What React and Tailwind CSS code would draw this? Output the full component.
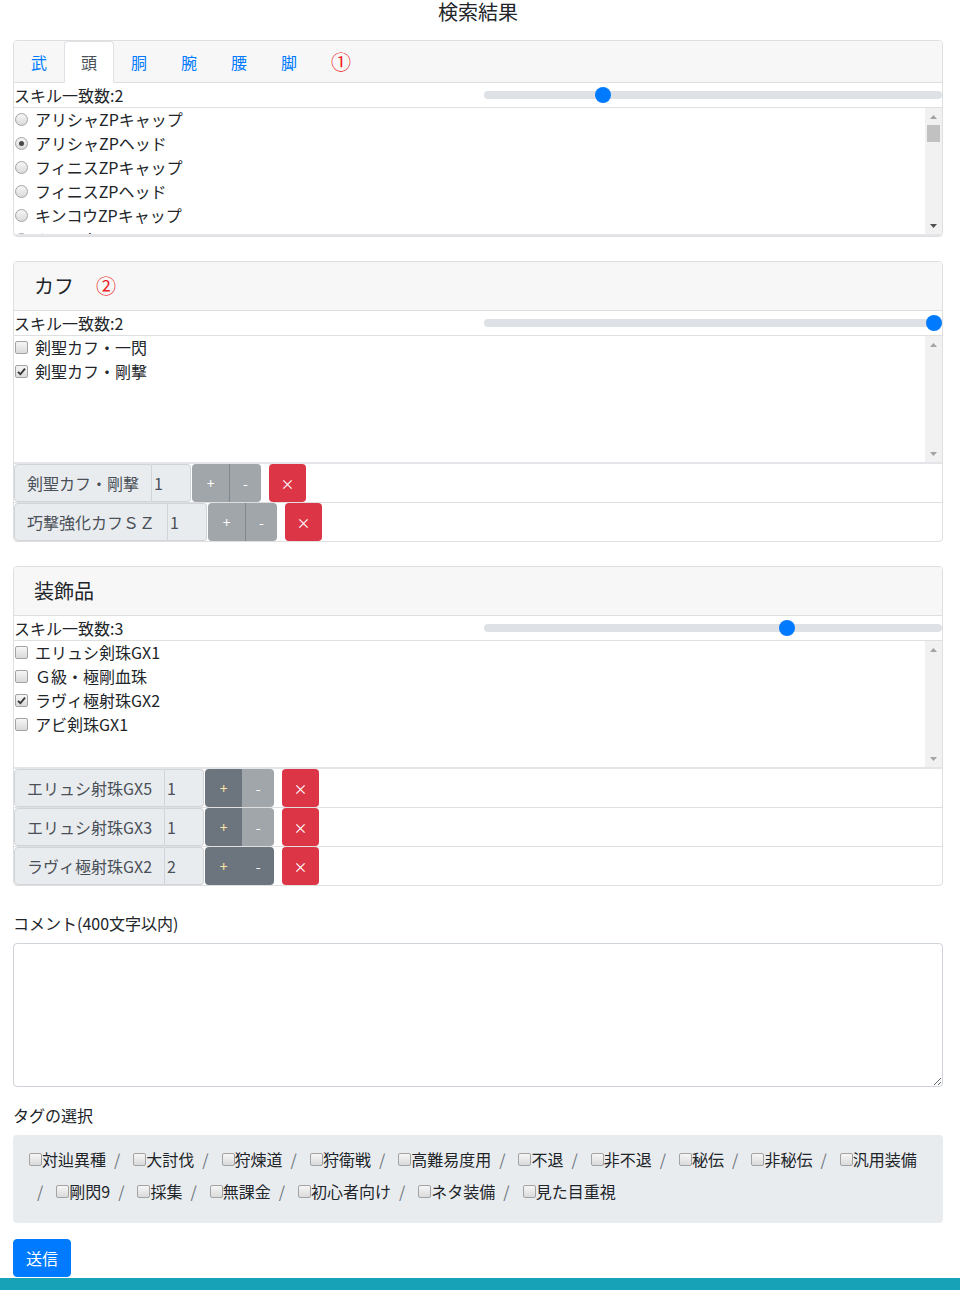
import React from "react";

function Radio({ checked }) {
  return (
    <span className="flex h-[13px] w-[13px] shrink-0 items-center justify-center rounded-full border border-[#a3a3a3] bg-linear-to-b from-[#f6f6f6] to-[#dadada]">
      {checked && <span className="h-[5px] w-[5px] rounded-full bg-[#4a4a4a]" />}
    </span>
  );
}

function Check({ checked }) {
  return (
    <span className="flex h-[13px] w-[13px] shrink-0 items-center justify-center rounded-[2px] border border-[#a3a3a3] bg-linear-to-b from-[#f6f6f6] to-[#dadada]">
      {checked && (
        <svg width="9" height="9" viewBox="0 0 9 9">
          <path d="M1 4.8 L3.4 7.2 L8 1.6" fill="none" stroke="#333" strokeWidth="1.8" />
        </svg>
      )}
    </span>
  );
}

function Scrollbar({ thumb, downDark }) {
  return (
    <div className="flex w-[17px] shrink-0 flex-col items-center bg-[#f1f1f1]">
      <div className="flex h-[17px] w-full items-center justify-center">
        <svg width="7" height="4" viewBox="0 0 7 4">
          <path d="M0 4 L3.5 0 L7 4 Z" fill="#a3a3a3" />
        </svg>
      </div>
      {thumb && <div className="h-[17px] w-[13px] bg-[#c1c1c1]" />}
      <div className="flex-1" />
      <div className="flex h-[17px] w-full items-center justify-center">
        <svg width="7" height="4" viewBox="0 0 7 4">
          <path d="M0 0 L7 0 L3.5 4 Z" fill={downDark ? "#505050" : "#a3a3a3"} />
        </svg>
      </div>
    </div>
  );
}

function SkillRow({ count, min, max }) {
  const ratio = (count - min) / (max - min);
  return (
    <div className="flex h-[25px] items-center justify-between border-b border-[#dfdfdf]">
      <span className="leading-6">スキル一致数:{count}</span>
      <div className="relative h-2 w-[458px] rounded-full bg-[#dee2e6]">
        <span
          className="absolute top-[-4px] h-4 w-4 rounded-full bg-[#007bff]"
          style={{ left: `${Math.round(ratio * 442)}px` }}
        />
      </div>
    </div>
  );
}

function ListBox({ children, thumb, downDark }) {
  return (
    <div className="flex h-[128px] overflow-hidden border-b-2 border-[#e3e5e8]">
      <div className="flex-1 overflow-hidden">{children}</div>
      <Scrollbar thumb={thumb} downDark={downDark} />
    </div>
  );
}

function ListItem({ type, checked, label }) {
  return (
    <div className="flex h-6 items-center gap-[7px] pl-px leading-6 whitespace-nowrap">
      {type === "radio" ? <Radio checked={checked} /> : <Check checked={checked} />}
      <span>{label}</span>
    </div>
  );
}

function ItemRow({ label, qty, plus, minus }) {
  const bothOff = !plus && !minus;
  return (
    <div className="flex h-[39px] border-b border-[#dfdfdf] last:h-[38px] last:border-b-0">
      <div className="flex h-[38px]">
        <span className="flex items-center rounded-l border border-[#ced4da] bg-[#e9ecef] px-3 text-[#495057] whitespace-nowrap">
          {label}
        </span>
        <span className="flex w-[39px] items-center rounded-r border-y border-r border-[#ced4da] bg-[#e9ecef] pl-[2px] text-[#495057]">
          {qty}
        </span>
      </div>
      <div className="ml-px flex h-[38px]">
        <span
          className={
            plus
              ? "flex w-[37px] items-center justify-center rounded-l bg-[#6c757d] text-sm text-[#fbe7a1]"
              : "flex w-[37px] items-center justify-center rounded-l bg-[#a1a6ab] text-sm text-white"
          }
        >
          +
        </span>
        <span
          className={
            minus
              ? "flex w-[32px] items-center justify-center rounded-r bg-[#6c757d] text-sm text-white"
              : bothOff
              ? "flex w-[32px] items-center justify-center rounded-r border-l border-[#7f878e] bg-[#a1a6ab] text-sm text-white"
              : "flex w-[32px] items-center justify-center rounded-r bg-[#a1a6ab] text-sm text-white"
          }
        >
          -
        </span>
      </div>
      <span className="ml-2 flex h-[38px] w-[37px] items-center justify-center rounded bg-[#dc3545] text-sm text-white">
        ×
      </span>
    </div>
  );
}

function CardHeader({ title, mark }) {
  return (
    <div className="flex h-[49px] items-center border-b border-[#dfdfdf] bg-[#f7f7f7] px-5 text-xl leading-6">
      <span>{title}</span>
      {mark && <span className="ml-[22px] text-[#ee1c25]">{mark}</span>}
    </div>
  );
}

const tags = [
  "対辿異種",
  "大討伐",
  "狩煉道",
  "狩衛戦",
  "高難易度用",
  "不退",
  "非不退",
  "秘伝",
  "非秘伝",
  "汎用装備",
  "剛閃9",
  "採集",
  "無課金",
  "初心者向け",
  "ネタ装備",
  "見た目重視",
];

export default function App() {
  const tabs = ["武", "頭", "胴", "腕", "腰", "脚"];
  return (
    <div className="min-h-[1290px] w-[960px] bg-white font-['Noto_Sans_CJK_JP','Noto_Sans',sans-serif] text-base text-[#212529]">
      <div className="ml-[13px] w-[930px]">
        <h1 className="mb-4 text-center text-xl leading-6">検索結果</h1>

        {/* Card 1 */}
        <div className="mb-6 overflow-hidden rounded border border-[#dfdfdf]">
          <div className="flex h-[42px] items-end border-b border-[#dfdfdf] bg-[#f7f7f7]">
            {tabs.map((t) =>
              t === "頭" ? (
                <span
                  key={t}
                  className="-mb-px rounded-t border border-[#dee2e6] border-b-white bg-white px-4 py-2 leading-6 text-[#495057]"
                >
                  {t}
                </span>
              ) : (
                <span key={t} className="-mb-px border border-transparent px-4 py-2 leading-6 text-[#007bff]">
                  {t}
                </span>
              )
            )}
            <span className="-mb-px border border-transparent px-4 py-2 text-xl leading-6 text-[#ee1c25]">①</span>
          </div>
          <SkillRow count={2} min={1} max={5} />
          <ListBox thumb downDark>
            <div className="-mt-px">
              <ListItem type="radio" label="アリシャZPキャップ" />
              <ListItem type="radio" checked label="アリシャZPヘッド" />
              <ListItem type="radio" label="フィニスZPキャップ" />
              <ListItem type="radio" label="フィニスZPヘッド" />
              <ListItem type="radio" label="キンコウZPキャップ" />
              <ListItem type="radio" label="キンコウZPヘッド" />
            </div>
          </ListBox>
        </div>

        {/* Card 2 */}
        <div className="mb-6 overflow-hidden rounded border border-[#dfdfdf]">
          <CardHeader title="カフ" mark="②" />
          <SkillRow count={2} min={1} max={2} />
          <ListBox>
            <div className="-mt-px">
              <ListItem type="check" label="剣聖カフ・一閃" />
              <ListItem type="check" checked label="剣聖カフ・剛撃" />
            </div>
          </ListBox>
          <div>
            <ItemRow label="剣聖カフ・剛撃" qty="1" />
            <ItemRow label="巧撃強化カフＳＺ" qty="1" />
          </div>
        </div>

        {/* Card 3 */}
        <div className="overflow-hidden rounded border border-[#dfdfdf]">
          <CardHeader title="装飾品" />
          <SkillRow count={3} min={1} max={4} />
          <ListBox>
            <div className="-mt-px">
              <ListItem type="check" label="エリュシ剣珠GX1" />
              <ListItem type="check" label="Ｇ級・極剛血珠" />
              <ListItem type="check" checked label="ラヴィ極射珠GX2" />
              <ListItem type="check" label="アビ剣珠GX1" />
            </div>
          </ListBox>
          <div>
            <ItemRow label="エリュシ射珠GX5" qty="1" plus />
            <ItemRow label="エリュシ射珠GX3" qty="1" plus />
            <ItemRow label="ラヴィ極射珠GX2" qty="2" plus minus />
          </div>
        </div>

        {/* Comment */}
        <label className="mt-[25px] mb-2 block leading-6">コメント(400文字以内)</label>
        <textarea className="mb-4 block h-[144px] w-full rounded border border-[#ced4da] bg-white px-3 py-1.5" />

        <div className="mb-2 leading-6">タグの選択</div>
        <div className="mb-4 flex flex-wrap gap-y-2 rounded bg-[#e9ecef] px-4 pt-3 pb-5">
          {tags.map((t, i) => (
            <span key={t} className="flex h-6 items-center whitespace-nowrap leading-6">
              {i > 0 && <span className="px-2 text-[#6c757d]">/</span>}
              <span className={i > 0 ? "ml-[5px] flex" : "flex"}>
                <Check />
              </span>
              <span>{t}</span>
            </span>
          ))}
        </div>

        <button className="h-[38px] rounded border border-[#007bff] bg-[#007bff] px-3 leading-6 text-white">送信</button>
      </div>
      <div className="mt-px h-[20px] w-full bg-[#17a2b8]" />
    </div>
  );
}
